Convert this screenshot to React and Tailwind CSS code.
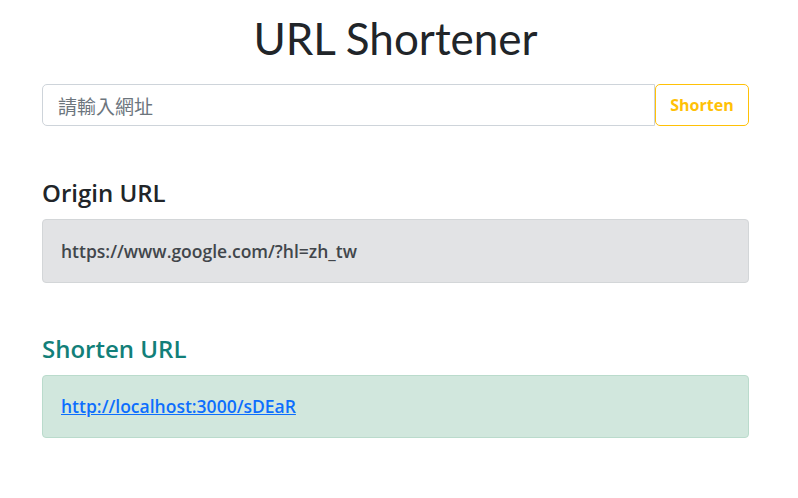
const App = () => {
    return (
        <div className="min-h-screen bg-white font-['Open_Sans',sans-serif]">
            <div className="w-[707px] ml-[42px] pt-[10px]">
                <h1 className="text-center text-[44px] leading-[56px] font-['Lato',sans-serif] font-normal text-[#212529]">
                    URL Shortener
                </h1>

                <div className="flex mt-[18px]">
                    <input
                        type="text"
                        placeholder="請輸入網址"
                        className="flex-1 h-[42px] pl-[15px] border border-[#ced4da] rounded-l-[5px] text-[19px] text-[#212529] placeholder:text-[#6c757d] outline-none font-['Noto_Sans_CJK_TC',sans-serif]"
                    />
                    <button className="w-[94px] h-[42px] border border-[#ffc107] rounded-[5px] text-[#ffc107] text-[16px] font-bold">
                        Shorten
                    </button>
                </div>

                <h3 className="mt-[52px] text-[24px] leading-[30px] font-semibold text-[#212529]">Origin URL</h3>
                <div className="mt-[11px] h-[64px] flex items-center px-[18px] bg-[#e2e3e5] border border-[#d3d6d8] rounded-[4px] text-[17.5px] font-semibold text-[#41464b]">
                    https://www.google.com/?hl=zh_tw
                </div>

                <h3 className="mt-[51px] text-[24px] leading-[30px] font-semibold text-[#127f79]">Shorten URL</h3>
                <div className="mt-[11px] h-[63px] flex items-center px-[18px] bg-[#d1e7dd] border border-[#badbcc] rounded-[4px]">
                    <a href="#" className="text-[17.5px] font-semibold text-[#0d6efd] underline">
                        http://localhost:3000/sDEaR
                    </a>
                </div>
            </div>
        </div>
    );
};

export default App;
